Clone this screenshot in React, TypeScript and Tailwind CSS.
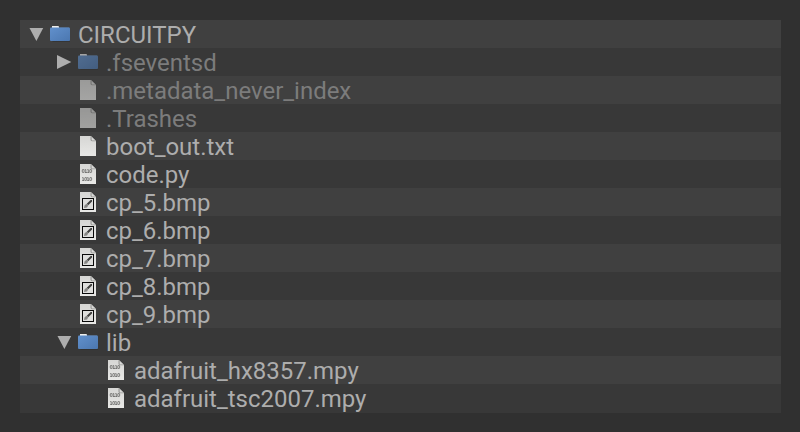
type Kind = "folder" | "file" | "code" | "image";

interface Entry {
  name: string;
  kind: Kind;
  depth: number;
  open?: boolean;
  dim?: boolean;
}

const entries: Entry[] = [
  { name: "CIRCUITPY", kind: "folder", depth: 0, open: true },
  { name: ".fseventsd", kind: "folder", depth: 1, open: false, dim: true },
  { name: ".metadata_never_index", kind: "file", depth: 1, dim: true },
  { name: ".Trashes", kind: "file", depth: 1, dim: true },
  { name: "boot_out.txt", kind: "file", depth: 1 },
  { name: "code.py", kind: "code", depth: 1 },
  { name: "cp_5.bmp", kind: "image", depth: 1 },
  { name: "cp_6.bmp", kind: "image", depth: 1 },
  { name: "cp_7.bmp", kind: "image", depth: 1 },
  { name: "cp_8.bmp", kind: "image", depth: 1 },
  { name: "cp_9.bmp", kind: "image", depth: 1 },
  { name: "lib", kind: "folder", depth: 1, open: true },
  { name: "adafruit_hx8357.mpy", kind: "code", depth: 2 },
  { name: "adafruit_tsc2007.mpy", kind: "code", depth: 2 },
];

const indents = ["pl-2", "pl-9", "pl-16"];

function Arrow({ open }: { open?: boolean }) {
  return (
    <svg className="h-7 w-5 shrink-0" viewBox="0 0 20 28" fill="#aeaeae">
      {open === true && <path d="M1.5 8H15.2L8.4 21Z" />}
      {open === false && <path d="M1 7V21L15.3 14Z" />}
    </svg>
  );
}

function FolderIcon() {
  return (
    <>
      <path d="M4 21H22V21.6H5Z" fill="#2b2b2b" />
      <path d="M4 6H10.5L11 7V9H4Z" fill="#eeeeec" />
      <path d="M11 7H21V9H11Z" fill="#4f5965" />
      <rect x="2" y="7.6" width="20" height="13.4" rx="1" fill="url(#folderFill)" />
    </>
  );
}

function PageIcon({ kind }: { kind: Kind }) {
  return (
    <>
      <path d="M4 4H15L20 9V24H4Z" fill="url(#pageFill)" />
      <path d="M14.5 4L20 9.3H16Q14.5 9 14.5 7.5Z" fill="#969694" />
      <path d="M15.6 5L19.4 8.6H16.2Q15.6 8.4 15.6 7.6Z" fill="#d8d8d6" />
      {kind === "code" && (
        <g fill="none" stroke="#4c4c4a" strokeWidth="0.65">
          <rect x="6.3" y="9.5" width="1.8" height="3" rx="0.6" />
          <path d="M8.8 9.6H9.8V12.5M8.8 12.5H11M11.3 9.6H12.3V12.5M11.3 12.5H13.3" />
          <rect x="13.8" y="9.5" width="1.8" height="3" rx="0.6" />
          <path d="M6.2 17.6H7.2V20.5M6.2 20.5H8.3" />
          <rect x="8.8" y="17.5" width="1.8" height="3" rx="0.6" />
          <path d="M11.2 17.6H12.2V20.5M11.2 20.5H13.3" />
          <rect x="13.8" y="17.5" width="1.8" height="3" rx="0.6" />
        </g>
      )}
      {kind === "image" && (
        <>
          <rect x="6.5" y="10.5" width="11" height="11" fill="#dededc" stroke="#090909" />
          <path d="M10.8 15.8L14.6 12H16V13.4L12.2 17.2Z" fill="#3e3e3c" />
          <path d="M8 20L8.6 17.2L10.6 15.8L12.2 17.4L11 19.4Z" fill="#858583" />
        </>
      )}
    </>
  );
}

function Row({ entry, striped }: { entry: Entry; striped: boolean }) {
  return (
    <li
      className={`flex h-7 items-center ${indents[entry.depth]} ${
        striped ? "bg-[#404040]" : "bg-[#383838]"
      }`}
    >
      <Arrow open={entry.open} />
      <svg
        className={`h-7 w-6 shrink-0 ${entry.dim ? "opacity-60" : ""}`}
        viewBox="0 0 24 28"
      >
        {entry.kind === "folder" ? <FolderIcon /> : <PageIcon kind={entry.kind} />}
      </svg>
      <span
        className={`ml-1.5 whitespace-pre pt-0.5 text-[23.97px] leading-[26px] ${
          entry.dim ? "text-[#7c7c7c]" : "text-[#adadad]"
        }`}
      >
        {entry.name}
      </span>
    </li>
  );
}

export default function App() {
  return (
    <main className="h-[432px] w-[800px] bg-[#303030] pt-5 pl-5 font-['Roboto',sans-serif]">
      <svg className="absolute h-0 w-0">
        <defs>
          <linearGradient id="folderFill" x1="0" y1="0" x2="1" y2="1">
            <stop offset="0" stopColor="#6190cc" />
            <stop offset="1" stopColor="#4b77b0" />
          </linearGradient>
          <linearGradient id="pageFill" x1="0" y1="0" x2="0" y2="1">
            <stop offset="0" stopColor="#d6d6d4" />
            <stop offset="1" stopColor="#e8e8e6" />
          </linearGradient>
        </defs>
      </svg>
      <ul className="h-[393px] w-[761px] bg-[#383838]">
        {entries.map((entry, i) => (
          <Row key={entry.name} entry={entry} striped={i % 2 === 0} />
        ))}
      </ul>
    </main>
  );
}
